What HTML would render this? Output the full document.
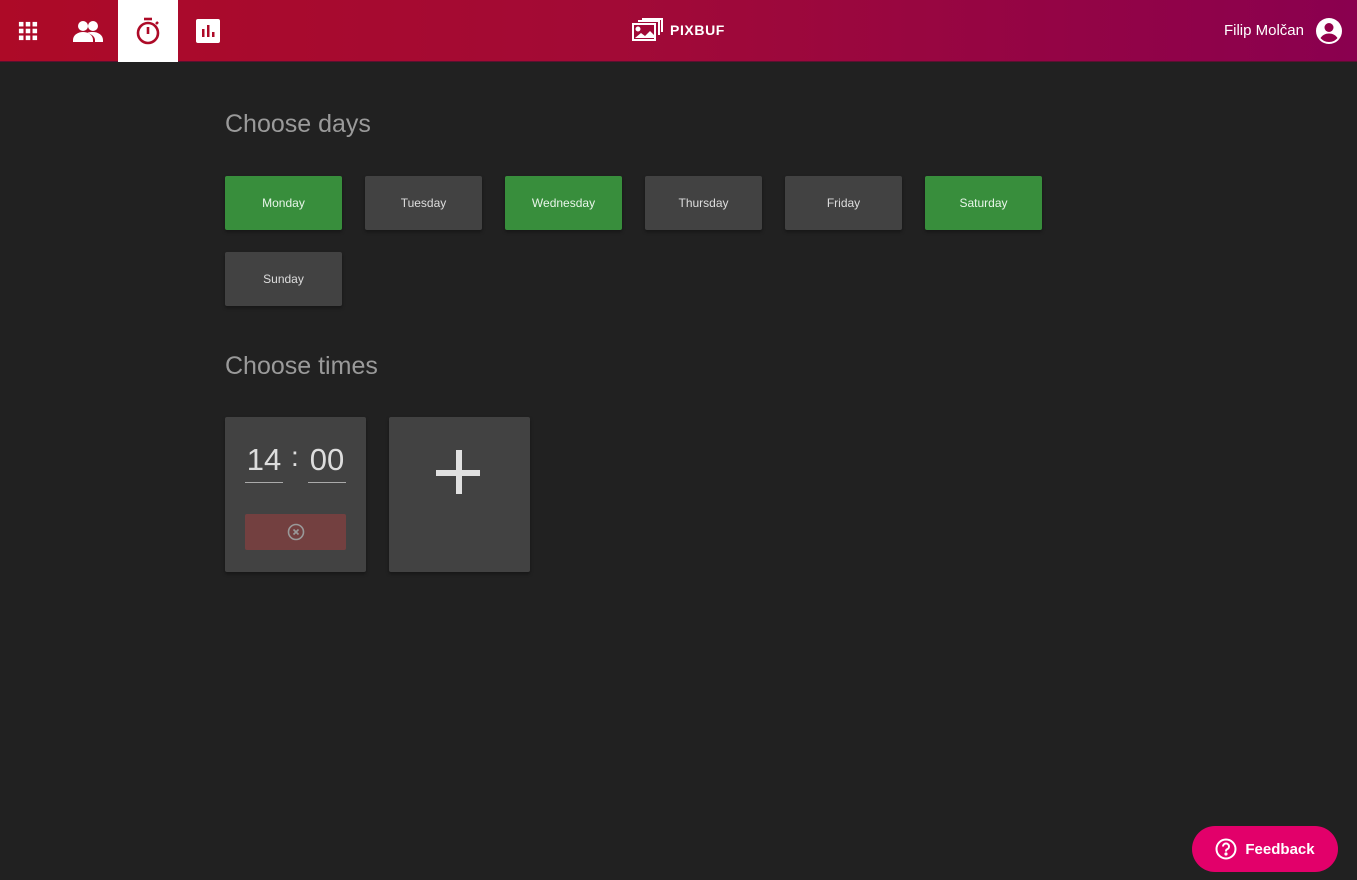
<!DOCTYPE html>
<html><head><meta charset="utf-8"><style>
*{box-sizing:border-box;margin:0;padding:0}
body{width:1357px;height:880px;background:#212121;font-family:"Liberation Sans",sans-serif;position:relative;overflow:hidden}
.hdr{position:absolute;left:0;top:0;width:1357px;height:62px;background:linear-gradient(90deg,#ad0a27 0%,#a20a36 45%,#8a004f 100%);border-bottom:1px solid #5a1030}
.ic{position:absolute;top:0;width:60px;height:62px;display:flex;align-items:center;justify-content:center}
.act{background:#fff}
.logo{position:absolute;left:632px;top:18px;display:flex;align-items:center;color:#fff;font-weight:bold;font-size:14px;letter-spacing:0.6px}
.user{position:absolute;right:53px;top:22px;color:#fff;font-size:15px}
h2{position:absolute;left:225px;font-weight:normal;font-size:25px;color:#9a9a9a}
.d{position:absolute;width:117px;height:54px;border-radius:2px;background:#424242;color:#ddd;font-size:12px;display:flex;align-items:center;justify-content:center;box-shadow:0 2px 3px rgba(0,0,0,.35)}
.g{background:#388e3c;color:#e8f5e9}
.card{position:absolute;top:417px;width:141px;height:155px;background:#424242;border-radius:2px;box-shadow:0 2px 3px rgba(0,0,0,.35)}
.num{position:absolute;top:25px;width:38px;height:41px;border-bottom:1px solid #aaa;color:#ddd;font-size:31px;text-align:center;line-height:36px}
.fb{position:absolute;left:1192px;top:826px;width:146px;height:46px;border-radius:23px;background:#e2006a;color:#fff;font-weight:bold;font-size:15px;display:flex;align-items:center;justify-content:center;gap:8px}
</style></head><body>
<div class="hdr">
 <div class="ic" style="left:-2px"><svg width="20" height="20" viewBox="0 0 22 22" fill="#fff"><rect x="1" y="1" width="5" height="5"/><rect x="8.5" y="1" width="5" height="5"/><rect x="16" y="1" width="5" height="5"/><rect x="1" y="8.5" width="5" height="5"/><rect x="8.5" y="8.5" width="5" height="5"/><rect x="16" y="8.5" width="5" height="5"/><rect x="1" y="16" width="5" height="5"/><rect x="8.5" y="16" width="5" height="5"/><rect x="16" y="16" width="5" height="5"/></svg></div>
 <div class="ic" style="left:58px"><svg width="30" height="22" viewBox="0 0 30 22" fill="#fff"><circle cx="10" cy="6" r="5"/><circle cx="20" cy="6" r="5"/><path d="M0 20c0-5 5-8 10-8s10 3 10 8v2H0z"/><path d="M14 13c2-1 4-1 6-1 5 0 10 3 10 8v2h-8v-2c0-3-3-6-8-7z"/></svg></div>
 <div class="ic act" style="left:118px"><svg width="26" height="28" viewBox="0 0 26 28" fill="none" stroke="#ad0a27" stroke-width="2.6"><line x1="9" y1="2" x2="17" y2="2"/><circle cx="13" cy="16" r="10"/><line x1="13" y1="10" x2="13" y2="17"/><line x1="21" y1="7" x2="23" y2="5"/></svg></div>
 <div class="ic" style="left:178px"><svg width="24" height="24" viewBox="0 0 24 24"><rect x="0" y="0" width="24" height="24" rx="2" fill="#fff"/><rect x="6" y="10" width="2.5" height="8" fill="#ad0a27"/><rect x="11" y="6" width="2.5" height="12" fill="#ad0a27"/><rect x="16" y="13" width="2.5" height="5" fill="#ad0a27"/></svg></div>
 <div class="logo"><svg width="32" height="24" viewBox="0 0 32 24" fill="none" stroke="#fff" stroke-width="2"><rect x="1" y="6" width="22" height="16"/><path d="M6 3h21v14"/><path d="M10 1h20v13"/><circle cx="6" cy="11" r="1.5" fill="#fff"/><path d="M3 20l6-5 4 3 5-5 4 4v3z" fill="#fff" stroke="none"/></svg><span style="margin-left:6px">PIXBUF</span></div>
 <div class="user">Filip Molčan</div>
 <svg style="position:absolute;left:1315px;top:17px" width="28" height="28" viewBox="0 0 28 28"><circle cx="14" cy="14" r="13" fill="#fff"/><circle cx="14" cy="10.5" r="4.5" fill="#93004a"/><path d="M5.5 21c2-3 5-4.5 8.5-4.5s6.5 1.5 8.5 4.5c-2 2.5-5 4-8.5 4s-6.5-1.5-8.5-4z" fill="#93004a"/></svg>
</div>
<h2 style="top:110px">Choose days</h2>
<div class="d g" style="left:225px;top:176px">Monday</div>
<div class="d" style="left:365px;top:176px">Tuesday</div>
<div class="d g" style="left:505px;top:176px">Wednesday</div>
<div class="d" style="left:645px;top:176px">Thursday</div>
<div class="d" style="left:785px;top:176px">Friday</div>
<div class="d g" style="left:925px;top:176px">Saturday</div>
<div class="d" style="left:225px;top:252px">Sunday</div>
<h2 style="top:352px">Choose times</h2>
<div class="card" style="left:225px">
 <div class="num" style="left:20px">14</div>
 <div style="position:absolute;left:66px;top:24px;color:#ddd;font-size:28px">:</div>
 <div class="num" style="left:83px">00</div>
 <div style="position:absolute;left:20px;top:97px;width:101px;height:36px;background:#734040;border-radius:2px;display:flex;align-items:center;justify-content:center"><svg width="18" height="18" viewBox="0 0 18 18" fill="none" stroke="#999" stroke-width="1.6"><circle cx="9" cy="9" r="7.5"/><path d="M6.5 6.5l5 5M11.5 6.5l-5 5"/></svg></div>
</div>
<div class="card" style="left:389px"><svg style="position:absolute;left:47px;top:33px" width="46" height="46" viewBox="0 0 46 46" fill="#e0e0e0"><rect x="20" y="0" width="6" height="44"/><rect x="0" y="20" width="44" height="6"/></svg></div>
<div class="fb"><svg width="22" height="22" viewBox="0 0 22 22" fill="none" stroke="#fff" stroke-width="2"><circle cx="11" cy="11" r="9.5"/><path d="M8 8.5a3 3 0 1 1 4 2.8c-1 .4-1 1-1 2.2"/><circle cx="11" cy="16" r=".6" fill="#fff"/></svg><span>Feedback</span></div>
</body></html>
